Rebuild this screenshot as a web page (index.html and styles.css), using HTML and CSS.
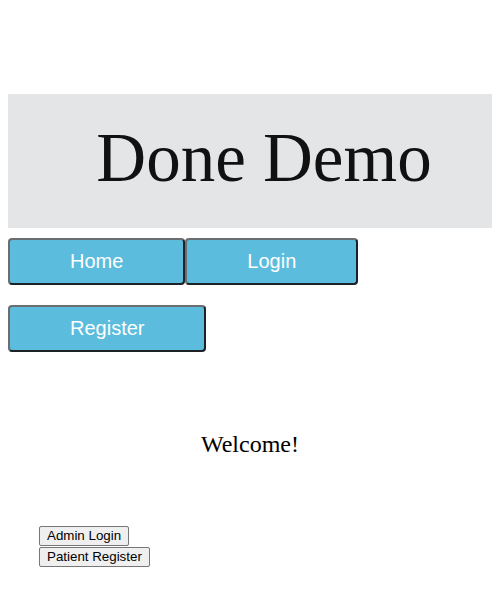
FILE: index.html
```html
<!DOCTYPE html>
<html>
<head>
<meta charset="utf-8">
<link rel="stylesheet" href="styles.css">
</head>
<body>
<div class="page">
  <header class="banner"><h1 class="title">Done Demo</h1></header>
  <nav class="nav">
    <div class="nav-row"><button class="nav-btn">Home</button><button class="nav-btn">Login</button></div>
    <div class="nav-row second"><button class="nav-btn">Register</button></div>
  </nav>
  <p class="welcome">Welcome!</p>
  <div class="actions">
    <button class="small-btn">Admin Login</button>
    <button class="small-btn">Patient Register</button>
  </div>
</div>
</body>
</html>
```
FILE: styles.css
```css
html, body { margin: 0; padding: 0; background: #fff; }
body { margin: 8px; font-family: "Liberation Serif", "Times New Roman", serif; }
.page { padding-top: 86px; }
.banner {
  background: #e4e5e7;
  height: 134px;
  display: flex;
  align-items: center;
  justify-content: center;
  padding-left: 28px;
}
.title {
  margin: 0;
  font-weight: normal;
  font-size: 69px;
  line-height: 80px;
  color: #111;
  padding-bottom: 6px;
}
.nav { margin-top: 10px; }
.nav-row { display: flex; }
.nav-row.second { margin-top: 20px; }
.nav-btn {
  font-family: "Liberation Sans", Arial, sans-serif;
  font-size: 20px;
  line-height: 23px;
  color: #fff;
  background: #5bbcdd;
  padding: 10px 60px;
  border: 2px solid;
  border-color: #6b6e70 #1c2226 #1c2226 #6b6e70;
  border-radius: 4px;
  margin: 0;
}
.welcome {
  margin: 79px 0 0;
  text-align: center;
  font-size: 24px;
  line-height: 27px;
  color: #000;
}
.actions {
  margin-top: 68px;
  padding-left: 31px;
  display: flex;
  flex-direction: column;
  align-items: flex-start;
  gap: 1px;
}
.small-btn {
  font-family: "Liberation Sans", Arial, sans-serif;
  font-size: 13.333px;
  line-height: 16px;
  padding: 1px 7px;
  background: #efefef;
  border: 1px solid #767676;
  border-radius: 2px;
  color: #000;
  margin: 0;
}
```
